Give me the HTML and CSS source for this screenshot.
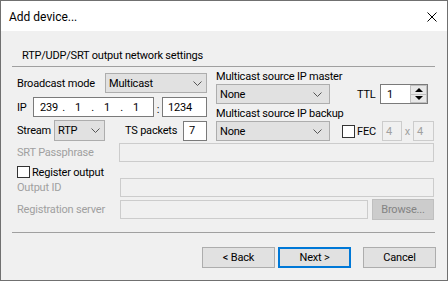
FILE: index.html
```html
<!DOCTYPE html>
<html lang="en">
<head>
  <meta charset="UTF-8">
  <title>Add device...</title>
  <link rel="stylesheet" href="styles.css">
</head>
<body>
  <div class="window">
    <div class="titlebar">
      <span class="title">Add device...</span>
      <svg class="close" width="10" height="10" viewBox="0 0 10 10">
        <path d="M0.5 0.5 L9.5 9.5 M9.5 0.5 L0.5 9.5" stroke="#000" stroke-width="1" fill="none"/>
      </svg>
    </div>

    <div class="dialog">
      <div class="group-title">RTP/UDP/SRT output network settings</div>
      <div class="sep"></div>

      <div class="top">
        <div class="col-left">
          <div class="row r-mode">
            <span>Broadcast mode</span>
            <div class="combo mode">Multicast<svg class="chev" width="9" height="5" viewBox="0 0 9 5"><path d="M0.5 0.5 L4.5 4.5 L8.5 0.5" stroke="#555" fill="none"/></svg></div>
          </div>
          <div class="row r-ip">
            <span class="lbl-ip">IP</span>
            <div class="edit ip">
              <span class="oct">239</span><span class="dot">.</span><span class="oct">1</span><span class="dot">.</span><span class="oct">1</span><span class="dot">.</span><span class="oct">1</span>
            </div>
            <span class="colon">:</span>
            <div class="edit port">1234</div>
          </div>
          <div class="row r-stream">
            <span class="lbl-stream">Stream</span>
            <div class="combo rtp">RTP<svg class="chev" width="9" height="5" viewBox="0 0 9 5"><path d="M0.5 0.5 L4.5 4.5 L8.5 0.5" stroke="#555" fill="none"/></svg></div>
            <span class="lbl-ts">TS packets</span>
            <div class="edit ts">7</div>
          </div>
        </div>

        <div class="col-mid">
          <div class="mid-label">Multicast source IP master</div>
          <div class="combo src">None<svg class="chev" width="9" height="5" viewBox="0 0 9 5"><path d="M0.5 0.5 L4.5 4.5 L8.5 0.5" stroke="#555" fill="none"/></svg></div>
          <div class="mid-label second">Multicast source IP backup</div>
          <div class="combo src">None<svg class="chev" width="9" height="5" viewBox="0 0 9 5"><path d="M0.5 0.5 L4.5 4.5 L8.5 0.5" stroke="#555" fill="none"/></svg></div>
        </div>

        <div class="col-right">
          <div class="row r-ttl">
            <span class="lbl-ttl">TTL</span>
            <div class="edit spin">
              <span class="spin-val">1</span>
              <div class="spin-btns">
                <div class="spin-up"><span class="tri-up"></span></div>
                <div class="spin-down"><span class="tri-down"></span></div>
              </div>
            </div>
          </div>
          <div class="row r-fec">
            <span class="check"></span>
            <span class="lbl-fec">FEC</span>
            <div class="edit off fec1">4</div>
            <span class="times">x</span>
            <div class="edit off fec2">4</div>
          </div>
        </div>
      </div>

      <div class="row r-srt">
        <span class="muted">SRT Passphrase</span>
        <div class="edit off srt"></div>
      </div>
      <div class="row r-reg">
        <span class="check"></span>
        <span class="lbl-reg">Register output</span>
      </div>
      <div class="row r-oid">
        <span class="muted">Output ID</span>
        <div class="edit off wide"></div>
      </div>
      <div class="row r-server">
        <span class="muted">Registration server</span>
        <div class="edit off server"></div>
        <div class="btn browse">Browse...</div>
      </div>

      <div class="sep bottom"></div>

      <div class="buttons">
        <div class="btn">&lt; Back</div>
        <div class="btn default">Next &gt;</div>
        <div class="btn cancel">Cancel</div>
      </div>
    </div>
  </div>
</body>
</html>
```

FILE: styles.css
```css
html, body {
  margin: 0;
  padding: 0;
}

body {
  font-family: Roboto, "Liberation Sans", sans-serif;
  font-size: 11px;
  letter-spacing: -0.2px;
  color: #000;
  background: #f0f0f0;
}

.window {
  width: 448px;
  height: 281px;
  box-sizing: border-box;
  border: 1px solid #707070;
  background: #f0f0f0;
  overflow: hidden;
}

.titlebar {
  height: 30px;
  background: #fff;
  display: flex;
  align-items: center;
  justify-content: space-between;
  padding: 0 10px 0 8px;
}

.title {
  font-size: 12px;
  letter-spacing: 0;
  margin-top: 1px;
}

.close {
  display: block;
  margin-top: 1px;
}

.group-title {
  margin-top: 18px;
  padding-left: 21px;
  line-height: 14px;
}

.sep {
  height: 1px;
  background: #a0a0a0;
  margin: 3px 0 0 11px;
  width: 423px;
}

.row {
  display: flex;
  align-items: center;
  white-space: nowrap;
}

/* upper block: three columns */
.top {
  display: flex;
  height: 74px;
}

.col-left {
  margin: 6px 0 0 16px;
  width: 190px;
}

.r-mode {
  height: 20px;
  justify-content: space-between;
}

.r-ip {
  height: 20px;
  margin-top: 4px;
}

.r-stream {
  height: 21px;
  margin-top: 3px;
}

.combo {
  box-sizing: border-box;
  height: 20px;
  background: #e1e1e1;
  border: 1px solid #adadad;
  display: flex;
  align-items: center;
  justify-content: space-between;
  padding: 0 4px 0 3px;
}

.chev {
  display: block;
}

.combo.mode {
  width: 102px;
}

.combo.rtp {
  width: 51px;
  height: 21px;
}

.combo.src {
  width: 114px;
  padding-right: 7px;
}

.edit {
  box-sizing: border-box;
  height: 20px;
  background: #fff;
  border: 1px solid #7a7a7a;
  display: flex;
  align-items: center;
  padding-left: 5px;
}

.edit.off {
  background: #f0f0f0;
  border-color: #cccccc;
  color: #a0a0a0;
}

.lbl-ip {
  width: 16px;
}

.ip {
  width: 121px;
}

.oct {
  width: 20px;
  text-align: center;
}

.dot {
  width: 9px;
  text-align: center;
}

.colon {
  width: 8px;
  text-align: center;
  padding-top: 4px;
}

.port {
  width: 45px;
}

.lbl-stream {
  width: 37px;
}

.lbl-ts {
  margin-left: 20px;
}

.ts {
  width: 24px;
  margin-left: auto;
}

.col-mid {
  margin-left: 9px;
  width: 114px;
  white-space: nowrap;
}

.mid-label {
  margin-top: 3px;
  line-height: 14px;
}

.mid-label.second {
  margin-top: 3px;
}

.col-right {
  margin-left: 12px;
  width: 92px;
}

.r-ttl {
  height: 20px;
  margin-top: 17px;
}

.lbl-ttl {
  margin-left: 15px;
  width: 23px;
}

.spin {
  width: 48px;
  padding-right: 0;
  padding-left: 6px;
  justify-content: space-between;
}

.spin-btns {
  width: 17px;
  height: 18px;
  display: flex;
  flex-direction: column;
}

.spin-up,
.spin-down {
  flex: 1;
  box-sizing: border-box;
  background: #e8e8e8;
  border: 1px solid #c0c0c0;
  display: flex;
  align-items: center;
  justify-content: center;
}

.spin-down {
  border-top: none;
}

.tri-up {
  width: 0;
  height: 0;
  border-left: 4px solid transparent;
  border-right: 4px solid transparent;
  border-bottom: 4px solid #000;
}

.tri-down {
  width: 0;
  height: 0;
  border-left: 4px solid transparent;
  border-right: 4px solid transparent;
  border-top: 4px solid #000;
}

.r-fec {
  height: 20px;
  margin-top: 17px;
}

.check {
  box-sizing: border-box;
  width: 13px;
  height: 13px;
  border: 1px solid #333;
  background: #fff;
}

.lbl-fec {
  margin-left: 2px;
  width: 25px;
}

.fec1 {
  width: 20px;
  padding-left: 3px;
}

.times {
  width: 11px;
  text-align: center;
  color: #a0a0a0;
}

.fec2 {
  width: 21px;
  padding-left: 3px;
}

/* lower block */
.r-srt,
.r-reg,
.r-oid,
.r-server {
  margin-left: 16px;
}

.muted {
  color: #a0a0a0;
}

.r-srt {
  height: 19px;
  margin-top: 2px;
  justify-content: space-between;
  width: 417px;
}

.srt {
  width: 315px;
  height: 19px;
}

.r-reg {
  height: 12px;
  margin-top: 4px;
}

.r-reg .check {
  width: 13px;
  height: 12px;
}

.lbl-reg {
  margin-left: 2px;
}

.r-oid {
  height: 19px;
  justify-content: space-between;
  width: 417px;
}

.wide {
  width: 314px;
  height: 19px;
}

.r-server {
  height: 21px;
  margin-top: 2px;
  width: 417px;
}

.server {
  width: 248px;
  height: 19px;
  margin-left: auto;
}

.btn {
  box-sizing: border-box;
  width: 73px;
  height: 21px;
  background: #e1e1e1;
  border: 1px solid #adadad;
  display: flex;
  align-items: center;
  justify-content: center;
}

.btn.browse {
  width: 62px;
  margin-left: 4px;
  background: #cccccc;
  border-color: #bfbfbf;
  color: #838383;
}

.sep.bottom {
  margin-top: 12px;
}

.buttons {
  display: flex;
  justify-content: flex-end;
  margin: 14px 11px 0 0;
}

.btn.default {
  margin-left: 3px;
  border: 2px solid #0078d7;
}

.btn.cancel {
  margin-left: 12px;
}
```
